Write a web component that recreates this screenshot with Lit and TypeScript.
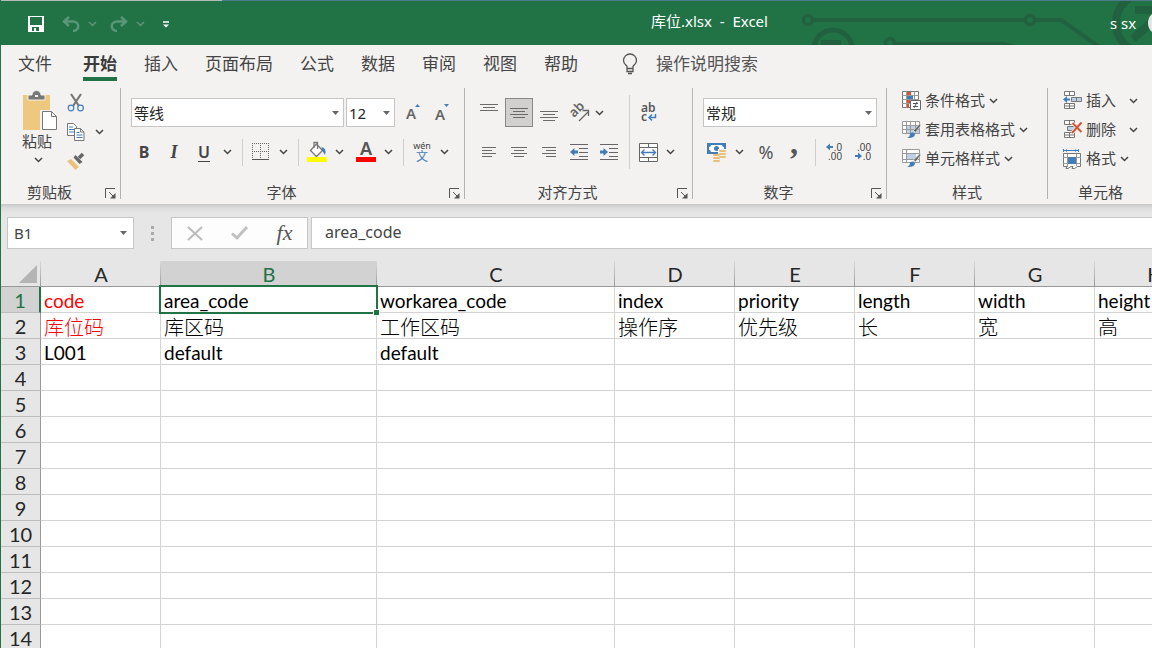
import { LitElement, html, svg, css, nothing } from "lit";
import { customElement, state } from "lit/decorators.js";
import { classMap } from "lit/directives/class-map.js";

const G = "#666";
const BLUE = "#437db8";

const icon = (w: number, h: number, body: unknown) =>
  html`<svg width=${w} height=${h} viewBox="0 0 ${w} ${h}" aria-hidden="true">${body}</svg>`;

const chevron = () => icon(9, 6, svg`<path d="M1 1l3.5 3.5L8 1" fill="none" stroke="currentColor" stroke-width="1.5"/>`);
const triangle = () => icon(7, 4, svg`<path d="M0 0h7L3.5 4z" fill="#666"/>`);
const launcherIcon = () =>
  icon(11, 11, svg`<path d="M.5 10V.5H10M4 4l5 5" fill="none" stroke="#555"/><path d="M10.500 5v5.500H5z" fill="#555"/>`);

const bars = (w: number, rows: [number, number, number][]) =>
  icon(w, 20, rows.map(([x, y, len]) => svg`<path d="M${x} ${y + 0.5}h${len}" stroke="#6a6a6a"/>`));

const icons = {
  save: () => icon(16, 16, svg`<path fill="#fff" fill-rule="evenodd" d="M0 0h16v16H0zM2 1v8h12V1zM4 11v4h2v-3h2v3h3v-4z"/>`),
  undo: () => icon(18, 16, svg`<path d="M7 1L2 5.500 7 10M2.500 5.500H11a5 4.500 0 0 1 0 9.500" fill="none" stroke="currentColor" stroke-width="2.500"/>`),
  redo: () => icon(18, 16, svg`<path d="M11 1l5 4.500-5 4.500M15.500 5.500H7a5 4.500 0 0 0 0 9.500" fill="none" stroke="currentColor" stroke-width="2.500"/>`),
  customise: () => icon(6, 7, svg`<path d="M0 1h6" stroke="#fff" stroke-width="1.500"/><path d="M0 3.500h6l-3 3z" fill="#fff"/>`),
  bulb: () => icon(16, 22, svg`<path d="M5 15.500v-2.200C3.500 11.500 1.500 10.500 1.500 7.500a6.500 6.500 0 0 1 13 0c0 3-2 4-3.500 5.800v2.200zM5 15.500v3h6v-3M6 20.500h4" fill="none" stroke="#555" stroke-width="1.300"/>`),
  paste: () => icon(36, 40, svg`<path d="M1 4h27v35H1z" fill="#edc87e"/><path d="M6 9V4h4a4.500 4.500 0 0 1 9 0h4v5z" fill="#777" stroke="#f3f2f1"/><path d="M13 4h3v2h-3z" fill="#f3f2f1"/><path d="M18 19h19v21H18z" fill="#f3f2f1"/><path d="M20.500 20.500h9l5 5v13h-14z" fill="#fff" stroke="#777"/><path d="M29.500 20.500v5h5" fill="none" stroke="#777"/>`),
  cut: () => icon(18, 20, svg`<path d="M4 1l8 12M14 1L6 13" stroke="#777" stroke-width="2.200"/><circle cx="4" cy="15" r="2.800" fill="none" stroke=${BLUE} stroke-width="1.200"/><circle cx="13.500" cy="15" r="2.800" fill="none" stroke=${BLUE} stroke-width="1.200"/>`),
  copy: () => icon(18, 20, svg`<path d="M.5 1.500h6l3 3v9h-9z" fill="#fff" stroke="#777"/><path d="M2 5h4M2 7.500h5M2 10h5" stroke=${BLUE}/><path d="M7.500 6.500h6l3.500 3.500v8.500H7.500z" fill="#fff" stroke="#777"/><path d="M13.500 6.500V10H17" fill="none" stroke="#777"/><path d="M9.500 10.500h3M9.500 13h6M9.500 15.500h6" stroke=${BLUE}/>`),
  painter: () => icon(18, 18, svg`<path d="M0 9l4-2 8 8-3.500 3z" fill="#edc07a"/><path d="M6.500 5.500l2-2.500 7 7-3 2z" fill="#666"/><path d="M12 6l4-4" stroke="#666" stroke-width="3.500"/>`),
  grow: () => icon(20, 20, svg`<path d="M13 4l2.500-3L18 4z" fill=${BLUE}/><text x="4" y="16" class="glyph-a">A</text>`),
  shrink: () => icon(20, 20, svg`<path d="M13 1h5l-2.500 3z" fill=${BLUE}/><text x="4" y="17" class="glyph-a">A</text>`),
  borders: () => icon(18, 18, svg`<path d="M.5 0v16M16.500 0v16M0 .5h17M0 8.500h17M8.500 0v16" stroke=${G} stroke-dasharray="1 1"/><path d="M0 16.500h17" stroke="#555"/>`),
  fill: () => icon(20, 20, svg`<path d="M9.500 2l6 6.500-6 6-6-6z" fill="#fff" stroke="#777" stroke-width="1.300"/><path d="M7 6V.5h3.500V7" fill="none" stroke="#777" stroke-width="1.300"/><path d="M14.500 5q5.500 1 3.500 8l-2.500-4z" fill=${BLUE}/><path d="M0 15h20v5H0z" fill="#ff0"/>`),
  colour: () => icon(20, 20, svg`<text x="10" y="13" text-anchor="middle" class="glyph-colour">A</text><path d="M0 15h20v5H0z" fill="#f00"/>`),
  phonetic: () => icon(18, 20, svg`<text x="9" y="7" text-anchor="middle" class="glyph-wen">wén</text><text x="9" y="19" text-anchor="middle" class="glyph-zh">文</text>`),
  top: () => bars(18, [[0, 1, 18], [3, 4, 12], [0, 7, 18]]),
  middle: () => bars(18, [[0, 5, 18], [3, 8, 12], [0, 11, 18], [3, 14, 12]]),
  bottom: () => bars(18, [[0, 8, 18], [3, 11, 12], [0, 14, 18], [3, 17, 12]]),
  left: () => bars(16, [[1, 5, 14], [1, 8, 10], [1, 11, 14], [1, 14, 10]]),
  centre: () => bars(16, [[0, 5, 16], [3, 8, 10], [0, 11, 16], [3, 14, 10]]),
  right: () => bars(16, [[1, 5, 14], [5, 8, 10], [1, 11, 14], [5, 14, 10]]),
  rotate: () => icon(20, 20, svg`<text x="5" y="15" transform="rotate(-45 5 15)" class="glyph-ab">ab</text><path d="M10 18l9-9M13.500 7.500H19.500V13" fill="none" stroke=${G} stroke-width="1.300"/>`),
  outdent: () => icon(18, 18, svg`<path d="M0 1.500h18M9 5.500h9M9 9.500h9M9 13.500h9M0 16.500h18" stroke=${G}/><path d="M0 9l4.500-4v2.500H8v3H4.500V13z" fill=${BLUE}/>`),
  indent: () => icon(18, 18, svg`<path d="M0 1.500h18M9 5.500h9M9 9.500h9M9 13.500h9M0 16.500h18" stroke=${G}/><path d="M8 9L3.500 5v2.500H0v3h3.500V13z" fill=${BLUE}/>`),
  wrap: () => icon(18, 20, svg`<text x="2" y="9" class="glyph-wrap">ab</text><text x="2" y="18" class="glyph-wrap">c</text><path d="M16.500 11v3.500H10.500M13 11.500l-3 3 3 3" fill="none" stroke=${BLUE} stroke-width="1.500"/>`),
  merge: () => icon(19, 19, svg`<path d="M.5.5h18v18H.5z" fill="#fff" stroke=${G}/><path d="M0 4.500h19M0 14.500h19M9.500 0v4M9.500 15v4" stroke=${G}/><path d="M2.500 9.500h14M5.500 6.500l-3 3 3 3M13.500 6.500l3 3-3 3" fill="none" stroke=${BLUE} stroke-width="1.300"/>`),
  currency: () => icon(20, 20, svg`<path d="M0 1h19v11H0z" fill=${BLUE}/><path d="M2 5q2 0 2-2h11q0 2 2 2v3q-2 0-2 2H4q0-2-2-2z" fill="#fff"/><circle cx="9.500" cy="6.500" r="2.500" fill=${BLUE}/><path d="M11 7h9v13H6v-7h5z" fill="#f3f2f1"/><g fill="#e8c07c"><rect x="12" y="8" width="7" height="2" rx="1"/><rect x="12" y="11" width="7" height="2" rx="1"/><rect x="12" y="14" width="7" height="2" rx="1"/><rect x="6" y="12" width="7" height="2" rx="1"/><rect x="6" y="15" width="7" height="2" rx="1"/><rect x="6" y="18" width="7" height="2" rx="1"/></g>`),
  moreDigits: () => icon(18, 20, svg`<path d="M1 5l4-3.500V4h3v2H5v2.500z" fill=${BLUE}/><text x="17" y="9" text-anchor="end" class="glyph-digits">.0</text><text x="17" y="18" text-anchor="end" class="glyph-digits">.00</text>`),
  lessDigits: () => icon(18, 20, svg`<path d="M8 14l-4-3.500V13H1v2h3v2.500z" fill=${BLUE}/><text x="17" y="9" text-anchor="end" class="glyph-digits">.00</text><text x="17" y="18" text-anchor="end" class="glyph-digits">.0</text>`),
  conditional: () => icon(19, 19, svg`<path d="M.5.500h16v16H.5z" fill="#fff" stroke="#777"/><path d="M0 4.500h17M0 8.500h17M0 12.500h17M4.500 0v17M12.500 0v17" stroke="#999"/><path d="M5 1h4v3H5zM5 9h3v3H5zM5 13h2v4H5z" fill="#d65532"/><path d="M5 5h6v3H5z" fill=${BLUE}/><path d="M8.500 9.500h10v9h-10z" fill="#fff" stroke="#666"/><path d="M11 12.500h5M11 15.500h5M15 11l-3 6" stroke="#555"/>`),
  tableStyle: () => icon(19, 19, svg`<path d="M.5 1.500h17v12H.5z" fill="#fff"/><path d="M5 5h13v9H5z" fill="#bcd0e6"/><path d="M.5 1.500h17v12H.5zM0 5.500h18M0 9.500h18M4.500 1v13M8.500 1v13M13.500 1v13" fill="none" stroke="#999"/><path d="M18.500 3l-7 7.500 2 2 5-6.500z" fill="#666" stroke="#f3f2f1" stroke-width=".6"/><path d="M5 18q3-1 3-4.500 3-2 5 .5 0 4.500-8 4z" fill=${BLUE}/>`),
  cellStyle: () => icon(19, 19, svg`<path d="M.5.500h17v13H.5z" fill="#fff"/><path d="M4 4h10v7H4z" fill="#bcd0e6"/><path d="M.5.500h17v13H.5zM0 4.500h18M0 10.500h18M4.500 0v14" fill="none" stroke="#999"/><path d="M18.500 4l-7 7 2 2 5-6.500z" fill="#666" stroke="#f3f2f1" stroke-width=".6"/><path d="M5 18q3-1 3-4.500 3-2 5 .5 0 4.500-8 4z" fill=${BLUE}/>`),
  insert: () => icon(19, 19, svg`<path d="M1.500.500h10v4h-10zM6.500.500v4M1.500 12.500h10v5h-10zM6.500 12v6M1.500 15h10" fill="#fff" stroke="#777"/><path d="M8.500 6.500h10v4h-10z" fill="#bcd0e6" stroke="#777"/><path d="M13.500 6.500v4" stroke="#777"/><path d="M0 8.500l4-3.500v2.500h3v2H4V12z" fill=${BLUE}/>`),
  remove: () => icon(19, 19, svg`<path d="M1.500.500h10v4h-10zM6.500.500v4M1.500 12.500h10v5h-10zM6.500 12v6M1.500 15h10" fill="#fff" stroke="#777"/><path d="M4.500 6.500h7v4h-7z" fill="#bcd0e6" stroke="#777"/><path d="M9 2.500l10 10M18.500 2L9 13" stroke="#f3f2f1" stroke-width="3.500"/><path d="M9.500 3l9 9M18.500 2.500L9 13" stroke="#d65532" stroke-width="2"/>`),
  format: () => icon(19, 20, svg`<path d="M1 1.500h15M.5 0v3M15.500 0v3" stroke=${BLUE}/><path d="M2 1.500l2-1.500v3zM14 1.500L12 0v3z" fill=${BLUE}/><path d="M.5 4.500h17v13h-3l-3 2H9l1-2H8l-3 2H3l1-2H.5z" fill="#fff" stroke="#777"/><path d="M0 8.500h18M0 14.500h18M4.500 5v13M13.500 5v12" stroke="#999"/><path d="M5 8h8v7H5z" fill=${BLUE}/>`),
  cross: () => icon(16, 15, svg`<path d="M1 1l14 13M15 1L1 14" stroke="#bbb" stroke-width="2"/>`),
  tick: () => icon(17, 14, svg`<path d="M1 7.500l5 4.500L16 1" fill="none" stroke="#c0c0c0" stroke-width="3"/>`),
};

const TABS = ["文件", "开始", "插入", "页面布局", "公式", "数据", "审阅", "视图", "帮助"];

const COLUMNS: [string, number][] = [
  ["A", 120], ["B", 216], ["C", 238], ["D", 120], ["E", 120], ["F", 120], ["G", 120], ["H", 120],
];

const DATA = [
  ["code", "area_code", "workarea_code", "index", "priority", "length", "width", "height"],
  ["库位码", "库区码", "工作区码", "操作序", "优先级", "长", "宽", "高"],
  ["L001", "default", "default"],
];

const ROWS = Array.from({ length: 14 }, (_, i) => i);

@customElement("app-root")
export class AppRoot extends LitElement {
  @state() private tab = "开始";

  static styles = css`
    :host {
      display: flex;
      flex-direction: column;
      height: 100vh;
      overflow: hidden;
      box-sizing: border-box;
      border-left: 1px solid #217346;
      background: #fff;
      color: #444;
      font: 15px/20px "Noto Sans", "Noto Sans CJK SC", sans-serif;
    }
    * { box-sizing: border-box; }
    svg { display: block; flex: none; overflow: visible; }
    button {
      display: flex;
      align-items: center;
      justify-content: center;
      flex: none;
      margin: 0;
      padding: 0;
      border: 0;
      background: none;
      color: inherit;
      font: inherit;
      white-space: nowrap;
    }
    input, select {
      margin: 0;
      border: 1px solid #c6c6c6;
      border-radius: 0;
      outline: 0;
      background: #fff;
      color: #262626;
      font: inherit;
      appearance: none;
    }

    .titlebar {
      position: relative;
      display: flex;
      align-items: center;
      flex: none;
      height: 45px;
      padding: 2px 0 0 27px;
      border-top: 1px solid #4d7a8c;
      background: #217346;
      color: #fff;
    }
    .circuit { position: absolute; top: 0; right: 0; overflow: hidden; }
    .stripe { position: absolute; top: -1px; left: 0; width: 221px; height: 1px; background: #b5bcb8; }
    .quick { display: flex; align-items: center; gap: 13px; }
    .quick .pair { display: flex; align-items: center; gap: 8px; color: #5a967a; }
    .quick .first { margin-left: 5px; }
    .quick .more { margin-left: 5px; }
    .doc { position: relative; flex: 1; padding: 0 0 6px 140px; text-align: center; white-space: pre; }
    .account { position: relative; display: flex; align-items: center; gap: 12px; width: 42px; padding-bottom: 3px; overflow: hidden; white-space: nowrap; }
    .avatar { flex: none; width: 30px; height: 24px; border-radius: 12px; background: #e6e6e6; }

    .tabs {
      display: flex;
      align-items: flex-start;
      flex: none;
      gap: 27px;
      height: 43px;
      padding: 5px 17px 0;
      background: #f3f2f1;
      font-size: 17px;
      line-height: 27px;
    }
    .tab { height: 31px; border-bottom: 4px solid transparent; align-items: flex-start; }
    .tab.file { margin-right: 4px; }
    .tab.active { border-color: #217346; color: #3b3b3b; font-weight: 700; }
    .tell { gap: 18px; margin-left: 17px; color: #555; }

    .ribbon {
      display: flex;
      flex: none;
      height: 116px;
      padding-bottom: 5px;
      background: #f3f2f1;
    }
    .group {
      display: flex;
      flex-direction: column;
      flex: none;
      justify-content: space-between;
      border-right: 1px solid #b3b3b3;
    }
    .body { display: flex; }
    .caption { position: relative; display: flex; justify-content: center; line-height: 14px; padding-right: 22px; }
    .caption.plain { padding-right: 0; }
    .launcher { position: absolute; right: 4px; bottom: 0; height: 11px; }
    .rows { display: flex; flex-direction: column; gap: 11px; padding-top: 10px; }
    .row { display: flex; align-items: center; height: 29px; }
    .row.low { height: 28px; }
    .row.spaced { gap: 2px; }
    .b28 { width: 28px; height: 28px; }
    .b30 { width: 30px; height: 28px; }
    .pressed { height: 29px; border: 1px solid #8a8886; background: #d2d0ce; }
    .drop { width: 16px; height: 28px; }
    .drop.near { width: 9px; }
    .split { width: 1px; height: 27px; margin: 0 4px 0 7px; background: #d0cecc; }
    .split.tall { align-self: flex-start; height: 74px; margin: 7px 4px 0 6px; }
    .bold { font-weight: 700; font-size: 16px; }
    .italic { font: italic 700 18px "Liberation Serif", serif; }
    .underline { text-decoration: underline; text-underline-offset: 3px; font-weight: 600; font-size: 16px; }
    .percent { font-size: 18px; color: #555; }
    .comma { font: 700 32px/20px "Liberation Serif", serif; color: #555; padding-bottom: 18px; }
    .end { margin-left: 5px; }

    .pick { position: relative; display: block; height: 29px; }
    .pick select { width: 100%; height: 29px; padding: 0 20px 0 2px; }
    .pick svg { position: absolute; right: 5px; top: 13px; pointer-events: none; }
    .pick.font { width: 213px; }
    .pick.size { width: 49px; }
    .pick.number { width: 174px; }

    .clipboard { width: 120px; }
    .clipboard .body { padding-left: 21px; }
    .paste { flex-direction: column; align-items: flex-start; justify-content: flex-start; width: 36px; padding-top: 3px; }
    .paste .under { align-self: center; padding: 6px 4px 0 0; }
    .stack { display: flex; flex-direction: column; padding-left: 9px; }
    .stack .line { display: flex; align-items: center; height: 29px; gap: 6px; }
    .fonts { width: 344px; }
    .fonts .rows { padding-left: 10px; }
    .fonts .low { margin-left: -2px; }
    .sizers { display: flex; }
    .sizers button { width: 29px; height: 28px; }
    .aligns { width: 228px; }
    .aligns .rows { padding-left: 10px; }
    .aligns .rows.after { padding-left: 0; }
    .numbers { width: 194px; }
    .numbers .rows { padding-left: 10px; }
    .styles { width: 161px; }
    .cells { width: 106px; }
    .list { display: flex; flex-direction: column; gap: 4px; padding-left: 15px; }
    .item { justify-content: flex-start; gap: 4px; height: 25px; }
    .item .label { padding-bottom: 2px; }
    .item.wide .gap { padding-left: 9px; }

    .glyph-a { font: 600 15px "Noto Sans", sans-serif; fill: #666; }
    .glyph-colour { font: 600 18px "Noto Sans", sans-serif; fill: #555; }
    .glyph-wen { font: 9px "Noto Sans", sans-serif; fill: #444; }
    .glyph-zh { font: 12px "Noto Sans CJK SC", sans-serif; fill: #437db8; }
    .glyph-ab { font: 600 13px "Noto Sans", sans-serif; fill: #666; }
    .glyph-wrap { font: 600 12px "Noto Sans", sans-serif; fill: #555; }
    .glyph-digits { font: 10px "Liberation Sans", sans-serif; fill: #444; }

    .formula {
      display: flex;
      flex: none;
      height: 57px;
      padding: 13px 0 12px 6px;
      background: linear-gradient(#c8c8c8, #dcdcdc 4px, #e6e6e6 9px);
    }
    .namebox { position: relative; width: 127px; }
    .namebox input { width: 100%; height: 32px; padding: 0 24px 0 6px; color: #444; }
    .namebox button { position: absolute; right: 4px; top: 1px; width: 14px; height: 30px; }
    .grip { display: flex; flex-direction: column; justify-content: center; gap: 3px; width: 37px; padding-left: 17px; }
    .dot { width: 3px; height: 3px; background: #aaa; }
    .actions { display: flex; align-items: center; justify-content: space-around; width: 137px; border: 1px solid #c6c6c6; background: #fdfdfd; }
    .actions button { width: 45px; height: 30px; }
    .fx { font: italic 22px "Liberation Serif", serif; color: #555; }
    .entry { flex: 1; min-width: 0; height: 32px; margin-left: 3px; padding: 0 13px 2px; border-right: 0; color: #444; font-size: 16px; }

    .sheet { flex: 1; min-height: 0; overflow: hidden; }
    .grid {
      width: 1214px;
      table-layout: fixed;
      border-collapse: separate;
      border-spacing: 0;
      font: 20px/24px Lato, "Noto Sans CJK SC", sans-serif;
      color: #000;
    }
    .grid th, .grid td { height: 26px; padding: 1px 0 0; text-align: left; font-weight: 400; white-space: nowrap; }
    .grid td { position: relative; padding: 3px 0 0 3px; border-right: 1px solid #d4d4d4; border-bottom: 1px solid #d4d4d4; font-weight: 300; line-height: 22px; }
    .grid .latin { font-size: 19px; font-weight: 400; }
    .grid .col {
      border-bottom: 1px solid #999;
      background: linear-gradient(#dadada, #999) right / 1px 100% no-repeat #e6e6e6;
      color: #262626;
      text-align: center;
    }
    .grid .num { background: #e6e6e6; border-right: 1px solid #999; border-bottom: 1px solid #bdbdbd; text-align: center; color: #262626; }
    .grid .sel { background-color: #d2d2d2; color: #217346; }
    .grid .num.sel { border-right: 2px solid #217346; }
    .grid .corner { padding: 0; background: linear-gradient(#dadada, #999) right / 1px 100% no-repeat #e6e6e6; border-bottom: 1px solid #999; }
    .corner svg { margin: 0 0 0 18px; }
    .grid .red { color: #f00; }
    .cursor { position: absolute; z-index: 1; inset: -2px; border: 2px solid #217346; pointer-events: none; }
    .grid td.current { z-index: 1; }
    .handle { position: absolute; right: -4px; bottom: -4px; width: 7px; height: 7px; border: 1px solid #fff; background: #217346; }
  `;

  private drop(label: string, near = false) {
    return html`<button class=${classMap({ drop: true, near })} aria-label=${label}>${chevron()}</button>`;
  }

  private tool(label: string, body: unknown, cls = "b28") {
    return html`<button class=${cls} aria-label=${label}>${body}</button>`;
  }

  private caption(text: string, launcher = true) {
    return html`<div class=${classMap({ caption: true, plain: !launcher })}>
      <span>${text}</span>
      ${launcher ? html`<button class="launcher" aria-label="${text}设置">${launcherIcon()}</button>` : nothing}
    </div>`;
  }

  private item(text: string, body: unknown, wide = false) {
    return html`<button class=${classMap({ item: true, wide })}>
      ${body}<span class="label">${text}</span><span class="gap">${chevron()}</span>
    </button>`;
  }

  private renderTitle() {
    return html`<header class="titlebar">
      <div class="stripe"></div>
      <svg class="circuit" width="352" height="44" viewBox="0 0 352 44" aria-hidden="true">
        <g fill="none" stroke="#22613f" stroke-width="4">
          <circle cx="8" cy="19" r="4.500" stroke-width="3.500"/>
          <path d="M14 19h210M236 19h25l40 28"/>
          <circle cx="230" cy="19" r="4.500" stroke-width="3.500"/>
          <circle cx="33" cy="48" r="19" stroke-width="5"/>
          <path d="M21 42h20" stroke-width="6"/>
          <circle cx="90" cy="42" r="4.500" stroke-width="3.500"/>
          <path d="M96 43h108l14 4"/>
          <circle cx="346" cy="22" r="30" stroke-width="8"/>
          <path d="M335 9h17M333 38l20-18" stroke-width="8"/>
        </g>
      </svg>
      <div class="quick">
        ${this.tool("保存", icons.save(), "")}
        <div class="pair first">${this.tool("撤消", icons.undo(), "")}${this.tool("撤消列表", chevron(), "")}</div>
        <div class="pair">${this.tool("恢复", icons.redo(), "")}${this.tool("恢复列表", chevron(), "")}</div>
        ${this.tool("自定义快速访问工具栏", icons.customise(), "more")}
      </div>
      <div class="doc">库位.xlsx  -  Excel</div>
      <div class="account"><span>s sx</span><span class="avatar"></span></div>
    </header>`;
  }

  private renderTabs() {
    return html`<nav class="tabs">
      ${TABS.map(
        (t) => html`<button
          class=${classMap({ tab: true, file: t === "文件", active: t === this.tab })}
          @click=${() => (this.tab = t)}
        >${t}</button>`
      )}
      <button class="tell">${icons.bulb()}<span>操作说明搜索</span></button>
    </nav>`;
  }

  private renderRibbon() {
    return html`<section class="ribbon">
      <div class="group clipboard">
        <div class="body">
          <button class="paste">
            ${icons.paste()}<span>粘贴</span><span class="under">${chevron()}</span>
          </button>
          <div class="stack">
            <div class="line">${this.tool("剪切", icons.cut(), "")}</div>
            <div class="line">${this.tool("复制", icons.copy(), "")}${this.drop("复制选项")}</div>
            <div class="line">${this.tool("格式刷", icons.painter(), "")}</div>
          </div>
        </div>
        ${this.caption("剪贴板")}
      </div>

      <div class="group fonts">
        <div class="rows">
          <div class="row spaced">
            <label class="pick font"><select aria-label="字体"><option>等线</option></select>${triangle()}</label>
            <label class="pick size"><select aria-label="字号"><option>12</option></select>${triangle()}</label>
            <div class="sizers">${this.tool("增大字号", icons.grow(), "")}${this.tool("减小字号", icons.shrink(), "")}</div>
          </div>
          <div class="row low">
            <button class="b30 bold">B</button><button class="b30 italic">I</button><button class="b30 underline">U</button>
            ${this.drop("下划线")}
            <span class="split"></span>
            ${this.tool("边框", icons.borders())}${this.drop("边框选项")}
            <span class="split"></span>
            ${this.tool("填充颜色", icons.fill())}${this.drop("填充颜色选项")}
            ${this.tool("字体颜色", icons.colour(), "b28 end")}${this.drop("字体颜色选项")}
            <span class="split"></span>
            ${this.tool("拼音", icons.phonetic())}${this.drop("拼音选项")}
          </div>
        </div>
        ${this.caption("字体")}
      </div>

      <div class="group aligns">
        <div class="body">
          <div class="rows">
            <div class="row spaced">
              ${this.tool("顶端对齐", icons.top())}${this.tool("垂直居中", icons.middle(), "b28 pressed")}
              ${this.tool("底端对齐", icons.bottom())}${this.tool("方向", icons.rotate())}${this.drop("方向选项", true)}
            </div>
            <div class="row low spaced">
              ${this.tool("左对齐", icons.left())}${this.tool("居中", icons.centre())}${this.tool("右对齐", icons.right())}
              ${this.tool("减少缩进量", icons.outdent())}${this.tool("增加缩进量", icons.indent())}
            </div>
          </div>
          <span class="split tall"></span>
          <div class="rows after">
            <div class="row">${this.tool("自动换行", icons.wrap())}</div>
            <div class="row low">${this.tool("合并后居中", icons.merge())}${this.drop("合并选项")}</div>
          </div>
        </div>
        ${this.caption("对齐方式")}
      </div>

      <div class="group numbers">
        <div class="rows">
          <label class="pick number"><select aria-label="数字格式"><option>常规</option></select>${triangle()}</label>
          <div class="row low">
            ${this.tool("会计数字格式", icons.currency())}${this.drop("会计数字格式选项")}
            <button class="b28 percent end">%</button><button class="b28 comma" aria-label="千位分隔样式">,</button>
            <span class="split"></span>
            ${this.tool("增加小数位数", icons.moreDigits())}${this.tool("减少小数位数", icons.lessDigits(), "b30")}
          </div>
        </div>
        ${this.caption("数字")}
      </div>

      <div class="group styles">
        <div class="list">
          ${this.item("条件格式", icons.conditional())}
          ${this.item("套用表格格式", icons.tableStyle())}
          ${this.item("单元格样式", icons.cellStyle())}
        </div>
        ${this.caption("样式", false)}
      </div>

      <div class="group cells">
        <div class="list">
          ${this.item("插入", icons.insert(), true)}
          ${this.item("删除", icons.remove(), true)}
          ${this.item("格式", icons.format())}
        </div>
        ${this.caption("单元格", false)}
      </div>
    </section>`;
  }

  private renderFormula() {
    return html`<section class="formula">
      <div class="namebox">
        <input aria-label="名称框" .value=${"B1"} />
        <button aria-label="名称列表">${triangle()}</button>
      </div>
      <div class="grip"><span class="dot"></span><span class="dot"></span><span class="dot"></span></div>
      <div class="actions">
        ${this.tool("取消", icons.cross(), "")}${this.tool("输入", icons.tick(), "")}
        <button class="fx" aria-label="插入函数">fx</button>
      </div>
      <input class="entry" aria-label="编辑栏" .value=${"area_code"} />
    </section>`;
  }

  private renderSheet() {
    return html`<main class="sheet">
      <table class="grid">
        <colgroup>
          <col style="width:40px" />
          ${COLUMNS.map(([, w]) => html`<col style="width:${w}px" />`)}
        </colgroup>
        <thead>
          <tr>
            <th class="corner">${icon(18, 18, svg`<path d="M18 0v18H0z" fill="#b4b4b4"/>`)}</th>
            ${COLUMNS.map(([n]) => html`<th scope="col" class=${classMap({ col: true, sel: n === "B" })}>${n}</th>`)}
          </tr>
        </thead>
        <tbody>
          ${ROWS.map(
            (r) => html`<tr>
              <th scope="row" class=${classMap({ num: true, sel: r === 0 })}>${r + 1}</th>
              ${COLUMNS.map(
                (_, c) => html`<td class=${classMap({ latin: r !== 1, red: c === 0 && r < 2, current: r === 0 && c === 1 })}>${DATA[r]?.[c] ?? ""}${
                  r === 0 && c === 1 ? html`<span class="cursor"><span class="handle"></span></span>` : nothing
                }</td>`
              )}
            </tr>`
          )}
        </tbody>
      </table>
    </main>`;
  }

  render() {
    return html`${this.renderTitle()}${this.renderTabs()}${this.renderRibbon()}${this.renderFormula()}${this.renderSheet()}`;
  }
}
